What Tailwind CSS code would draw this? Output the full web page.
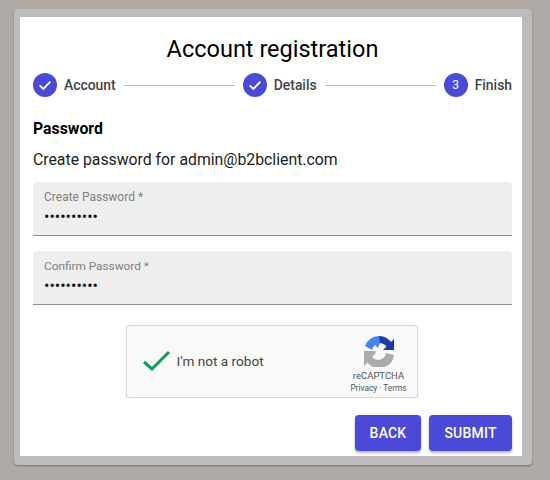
<!DOCTYPE html>
<html lang="en">
<head>
    <meta charset="UTF-8">
    <title>Account registration</title>
    <script src="https://cdn.jsdelivr.net/npm/@tailwindcss/browser@4"></script>
</head>
<body class="bg-[#afaaa5] h-[480px] overflow-hidden font-[Roboto,sans-serif]">
    <div class="pl-[14px] pt-[9px]">
        <!-- Modal frame -->
        <div class="w-[518px] h-[456px] bg-[#bcbcbc] rounded-[4px] pl-[6px] pt-[8px] shadow-[0_1px_2px_rgba(0,0,0,0.35)]">
            <div class="w-[502px] h-[439px] bg-white pl-[13px] pr-[10px] flex flex-col">
                <h1 class="text-[23.5px] leading-[28px] text-black text-center mt-[18px]">Account registration</h1>

                <!-- Stepper -->
                <div class="flex items-center h-[24px] mt-[10px] text-[13.9px] text-[#444]">
                    <span class="w-[24px] h-[24px] rounded-full bg-[#4b49d8] flex items-center justify-center">
                        <svg viewBox="0 0 24 24" class="w-[16px] h-[16px]" fill="none" stroke="white" stroke-width="2.8"><path d="M4 12.500l5.500 5.500L20 7"/></svg>
                    </span>
                    <span class="ml-[7px] font-medium">Account</span>
                    <span class="flex-1 h-px bg-[#bdbdbd] mx-[8px]"></span>
                    <span class="w-[24px] h-[24px] rounded-full bg-[#4b49d8] flex items-center justify-center">
                        <svg viewBox="0 0 24 24" class="w-[16px] h-[16px]" fill="none" stroke="white" stroke-width="2.8"><path d="M4 12.500l5.500 5.500L20 7"/></svg>
                    </span>
                    <span class="ml-[7px] font-medium">Details</span>
                    <span class="flex-1 h-px bg-[#bdbdbd] mx-[8px]"></span>
                    <span class="w-[24px] h-[24px] rounded-full bg-[#4b49d8] text-white text-[12px] flex items-center justify-center">3</span>
                    <span class="ml-[7px] font-medium">Finish</span>
                </div>

                <h2 class="text-[15.8px] leading-[20px] font-bold text-black mt-[22px]">Password</h2>
                <p class="text-[15.8px] leading-[20px] text-[#1c1c1c] mt-[11px]">Create password for admin@b2bclient.com</p>

                <!-- Fields -->
                <div class="h-[54px] mt-[12px] bg-[#eeeeee] rounded-t-[4px] border-b border-[#8f8f8f] px-[11px] pt-[8px]">
                    <label class="block text-[12px] leading-[14px] text-[#808080]">Create Password *</label>
                    <input type="password" value="1234567890" readonly class="block w-full mt-[3px] h-[20px] text-[16px] text-[#111] outline-none bg-transparent">
                </div>
                <div class="h-[54px] mt-[15px] bg-[#eeeeee] rounded-t-[4px] border-b border-[#8f8f8f] px-[11px] pt-[8px]">
                    <label class="block text-[11.8px] leading-[14px] text-[#808080]">Confirm Password *</label>
                    <input type="password" value="1234567890" readonly class="block w-full mt-[3px] h-[20px] text-[16px] text-[#111] outline-none bg-transparent">
                </div>

                <!-- reCAPTCHA -->
                <div class="self-center ml-[-2px] w-[292px] h-[73px] mt-[20px] bg-[#f9f9f9] border border-[#d6d6d6] rounded-[3px] shadow-[0_0_2px_rgba(0,0,0,0.08)] flex items-center">
                    <svg viewBox="0 0 30 24" class="w-[30px] h-[24px] ml-[15px] mb-[2px]" fill="none" stroke="#0f9d58" stroke-width="3"><path d="M2 13l8 7L27 3"/></svg>
                    <span class="ml-[5px] text-[13.600px] text-[#444]">I'm not a robot</span>
                    <div class="ml-auto w-[72px] mr-[2px] flex flex-col items-center">
                        <svg viewBox="0 0 32 32" class="w-[32px] h-[32px] mt-[4px]">
                            <path d="M16 1a15 15 0 0 1 12 6l3-3v11H20l3.500-3.500A9 9 0 0 0 16 8z" fill="#1c3aa9"/>
                            <path d="M16 1A15 15 0 0 0 2 11l7 4a8 8 0 0 1 3-5l3 3 2-5-1-7z" fill="#4285f4"/>
                            <path d="M1 16v15l3.500-3.500A15 15 0 0 0 31 20l-8-2a8 8 0 0 1-14 4l3.500-3.500V16z" fill="#ababab"/>
                        </svg>
                        <span class="text-[9.500px] leading-[12px] text-[#555] mt-[3px]">reCAPTCHA</span>
                        <span class="text-[8.300px] leading-[10px] text-[#555] mt-[1px]">Privacy · Terms</span>
                    </div>
                </div>

                <!-- Actions -->
                <div class="flex justify-end gap-[8px] mt-[17px]">
                    <button class="w-[66px] h-[36px] rounded-[4px] bg-[#4b49d8] text-white text-[14px] font-medium tracking-[0.2px] shadow-[0_2px_3px_rgba(0,0,0,0.3)]">BACK</button>
                    <button class="w-[83px] h-[36px] rounded-[4px] bg-[#4b49d8] text-white text-[14px] font-medium tracking-[0.2px] shadow-[0_2px_3px_rgba(0,0,0,0.3)]">SUBMIT</button>
                </div>
            </div>
        </div>
    </div>
</body>
</html>
